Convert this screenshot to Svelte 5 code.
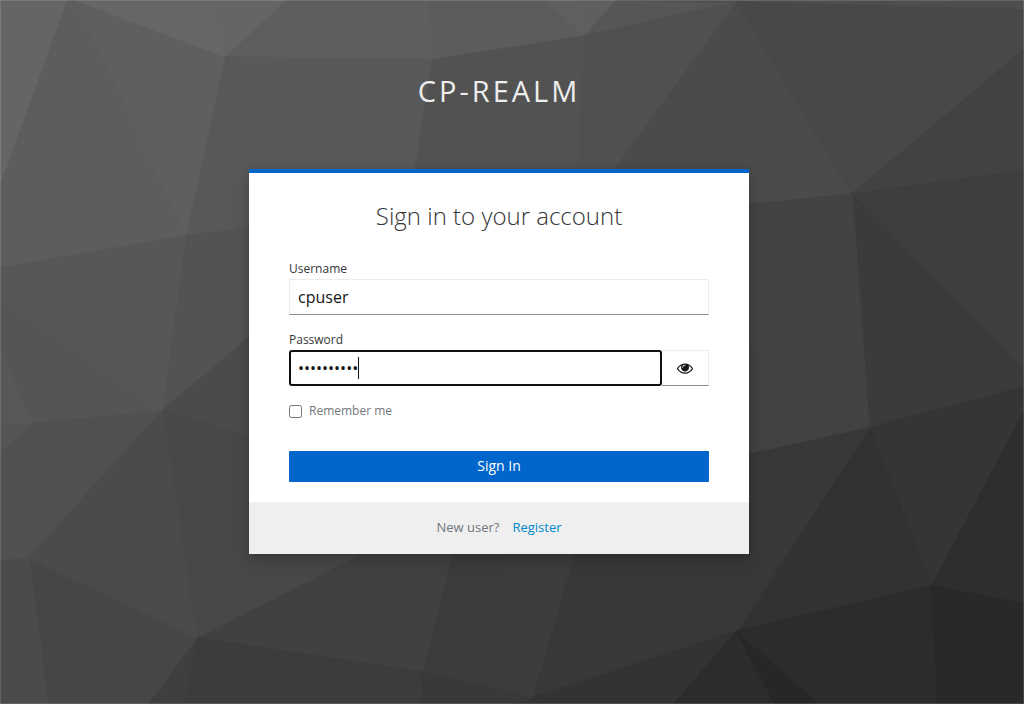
<script>
  let username = $state('cpuser');
  let password = $state('correcthor');
  let visible = $state(false);
  let remember = $state(false);

  // Facets of the low-poly backdrop: [fill, points]
  const facets = [
    ['#4a4a4a', '200,100 800,100 800,600 200,600'],
    ['#656565', '0,0 68,0 0,188'],
    ['#5d5d5d', '68,0 0,188 0,268 187,236 78,0'],
    ['#5f5f5f', '76,0 226,57 187,236'],
    ['#666666', '76,0 226,57 214,0'],
    ['#656565', '214,0 226,57 288,0'],
    ['#5e5e5e', '288,0 226,57 433,60 430,0'],
    ['#5c5c5c', '430,0 433,60 585,36 547,0'],
    ['#606060', '547,0 576,0 585,36'],
    ['#5f5f5f', '576,0 617,0 585,36'],
    ['#565656', '617,0 737,2 585,36'],
    ['#595959', '226,57 433,60 415,172 375,172'],
    ['#585858', '226,57 375,172 251,172 251,228 187,236'],
    ['#525252', '433,60 585,36 579,172 415,172'],
    ['#505050', '585,36 737,2 613,172 579,172'],
    ['#4b4b4b', '737,2 852,194 747,205 747,172 613,172'],
    ['#4e4e4e', '617,0 737,2 1024,10 1024,0'],
    ['#484848', '737,2 1024,10 1024,50 852,194'],
    ['#424242', '852,194 1024,50 1024,171'],
    ['#3e3e3e', '852,194 1024,171 1024,372'],
    ['#3b3b3b', '852,194 1024,372 1024,387 869,428'],
    ['#434343', '852,194 869,428 747,344 747,205'],
    ['#424242', '869,428 747,344 747,455'],
    ['#353535', '869,428 1024,387 1024,412 932,586'],
    ['#2e2e2e', '1024,412 1024,604 932,586'],
    ['#323232', '869,428 932,586 737,631'],
    ['#383838', '869,428 737,631 532,698 575,552 747,552 747,455'],
    ['#333333', '532,698 737,631 674,704 510,704'],
    ['#2c2c2c', '737,631 674,704 775,704'],
    ['#272727', '737,631 775,704 820,704'],
    ['#2c2c2c', '737,631 932,586 938,704 820,704'],
    ['#292929', '932,586 1024,604 1024,704 938,704'],
    ['#3d3d3d', '532,698 500,552 575,552'],
    ['#3c3c3c', '422,672 452,552 500,552 532,698'],
    ['#414141', '196,638 364,552 452,552 422,672'],
    ['#484848', '163,410 196,638 364,552 251,552 251,436'],
    ['#3c3c3c', '196,638 422,672 424,704 184,704'],
    ['#393939', '422,672 532,698 510,704 424,704'],
    ['#3f3f3f', '196,638 184,704 148,704'],
    ['#464646', '29,558 196,638 148,704 48,704'],
    ['#4b4b4b', '29,558 48,704 0,704 0,559'],
    ['#515151', '33,422 29,558 0,559 0,452'],
    ['#505050', '33,422 163,410 29,558'],
    ['#4b4b4b', '29,558 163,410 196,638'],
    ['#555555', '33,422 0,423 0,452'],
    ['#585858', '0,345 0,423 33,422'],
    ['#555555', '0,298 0,345 33,422 163,410'],
    ['#575757', '0,268 187,236 163,410 0,298'],
    ['#535353', '187,236 251,228 251,336 163,410'],
    ['#4b4b4b', '163,410 251,336 251,436']
  ];
</script>

<div class="page">
  <svg class="backdrop" viewBox="0 0 1024 704" preserveAspectRatio="xMidYMid slice" aria-hidden="true">
    {#each facets as [fill, points]}
      <polygon {points} {fill} stroke={fill} stroke-width="1.5" />
    {/each}
  </svg>

  <header class="realm">cp-realm</header>

  <main class="card">
    <h1>Sign in to your account</h1>
    <form onsubmit={(e) => e.preventDefault()}>
      <div class="field">
        <label for="username">Username</label>
        <input id="username" class="text" type="text" autocomplete="off" bind:value={username} />
      </div>

      <div class="field">
        <label for="password">Password</label>
        <div class="group">
          <div class="secret">
            <input
              id="password"
              class="text active"
              type={visible ? 'text' : 'password'}
              autocomplete="off"
              bind:value={password}
            />
            <span class="caret"></span>
          </div>
          <button class="eye" type="button" aria-label="Show password" onclick={() => (visible = !visible)}>
            <svg viewBox="0 0 1792 1792" width="16" height="16" aria-hidden="true">
              <path
                fill="currentColor"
                d="M1664 960q-152-236-381-353 61 104 61 225 0 185-131.5 316.5t-316.5 131.5-316.5-131.5-131.5-316.5q0-121 61-225-229 117-381 353 133 205 333.5 326.5t434.5 121.5 434.5-121.5 333.5-326.5zm-720-384q0-20-14-34t-34-14q-125 0-214.5 89.5t-89.5 214.5q0 20 14 34t34 14 34-14 14-34q0-86 61-147t147-61q20 0 34-14t14-34zm848 384q0 34-20 69-140 230-376.5 368.5t-499.5 138.5-499.5-139-376.5-368q-20-35-20-69t20-69q140-229 376.5-368t499.5-139 499.5 139 376.5 368q20 35 20 69z"
              />
            </svg>
          </button>
        </div>
      </div>

      <label class="remember">
        <input type="checkbox" bind:checked={remember} />
        Remember me
      </label>

      <button class="submit" type="submit">Sign In</button>
    </form>

    <footer>
      <span>New user?</span>
      <a href="#register">Register</a>
    </footer>
  </main>
</div>

<style>
  :global(body) {
    margin: 0;
    background: #393939;
  }

  .page {
    position: relative;
    box-sizing: border-box;
    min-height: 100vh;
    padding: 73px 26px 40px 0;
    overflow: hidden;
    isolation: isolate;
    font-family: 'Open Sans', 'Noto Sans', sans-serif;
    font-size: 12px;
    line-height: 18px;
    color: #363636;
  }

  .page::after {
    content: '';
    position: absolute;
    inset: 0;
    border: 1px solid rgba(255, 255, 255, 0.14);
    pointer-events: none;
  }

  .backdrop {
    position: absolute;
    inset: 0;
    z-index: -1;
    width: 100%;
    height: 100%;
  }

  .realm {
    margin-bottom: 61px;
    font-size: 29px;
    line-height: 35px;
    letter-spacing: 3px;
    text-align: center;
    text-transform: uppercase;
    color: #ededed;
  }

  .card {
    box-sizing: border-box;
    max-width: 500px;
    margin: 0 auto;
    border-top: 4px solid #0066cc;
    background: #fff;
    box-shadow: 0 8px 16px rgba(3, 3, 3, 0.16), 0 0 6px rgba(3, 3, 3, 0.1);
  }

  h1 {
    margin: 0;
    padding: 27px 40px 29px;
    font-size: 24px;
    font-weight: 300;
    line-height: 31px;
    text-align: center;
  }

  form {
    display: flex;
    flex-direction: column;
    padding: 0 40px 20px;
  }

  .field {
    display: flex;
    flex-direction: column;
    margin-bottom: 16px;
  }

  .field label {
    padding-bottom: 1px;
  }

  .text {
    box-sizing: border-box;
    width: 100%;
    height: 36px;
    margin: 0;
    padding: 0 8px;
    border: 1px solid #ededed;
    border-bottom-color: #8a8d90;
    border-radius: 0;
    outline: none;
    background: #fff;
    font: inherit;
    font-size: 16px;
    color: #151515;
  }

  .group {
    display: flex;
  }

  .secret {
    position: relative;
    flex: 1;
    display: flex;
  }

  .active {
    padding: 0 7px;
    border: 2px solid #101010;
    border-radius: 3px;
    caret-color: transparent;
  }

  .caret {
    position: absolute;
    top: 7px;
    left: 69px;
    width: 1px;
    height: 22px;
    background: #151515;
  }

  .eye {
    display: flex;
    align-items: center;
    justify-content: center;
    box-sizing: border-box;
    width: 47px;
    padding: 0;
    border: 1px solid #ededed;
    border-left: 0;
    border-bottom-color: #8a8d90;
    background: #fff;
    color: #151515;
  }

  .remember {
    display: flex;
    align-items: center;
    gap: 7px;
    color: #72767b;
  }

  .remember input {
    width: 13px;
    height: 13px;
    margin: 0;
  }

  .submit {
    margin-top: 31px;
    padding: 0 0 2px;
    border: 0;
    border-radius: 1px;
    background: #0066cc;
    font: inherit;
    font-size: 14px;
    line-height: 29px;
    color: #fff;
  }

  footer {
    display: flex;
    justify-content: center;
    gap: 13px;
    padding: 16px 40px 18px;
    background: #efefef;
    font-size: 13px;
    color: #72767b;
  }

  footer a {
    color: #0088ce;
    text-decoration: none;
  }
</style>
